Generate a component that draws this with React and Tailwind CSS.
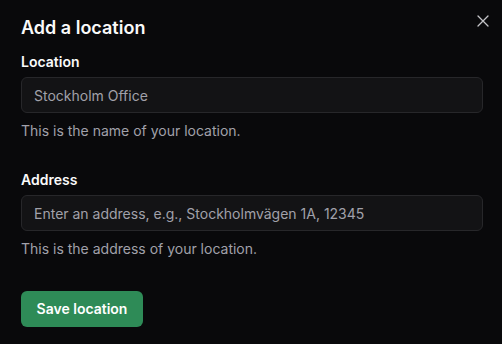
import { useState } from 'react';

const App = () => {
  const [name, setName] = useState('');
  const [address, setAddress] = useState('');

  return (
    <div
      className="relative w-[502px] h-[344px] bg-[#09090b] overflow-hidden"
      style={{ fontFamily: 'Inter, "Noto Sans", sans-serif' }}
    >
      <button type="button" className="absolute right-[9px] top-[11px] p-1 text-[#c4c4c8]">
        <svg width="12" height="12" viewBox="0 0 12 12" fill="none" stroke="currentColor" strokeWidth="1.3" strokeLinecap="round">
          <path d="M1 1L11 11M11 1L1 11" />
        </svg>
      </button>
      <div className="flex flex-col pl-[21px] pr-[19px] pt-[14px]">
        <h2 className="text-[#fafafa] text-lg font-semibold leading-7">Add a location</h2>
        <label className="flex flex-col mt-[10px]">
          <span className="text-[#fafafa] text-sm font-semibold leading-5">Location</span>
          <input
            className="mt-[5px] h-9 w-full rounded-md border border-[#27272a] bg-[#131315] px-3 text-sm text-[#fafafa] placeholder:text-[#a1a1aa] outline-none"
            placeholder="Stockholm Office"
            value={name}
            onChange={(e) => setName(e.target.value)}
          />
          <span className="mt-2 text-sm leading-5 text-[#a1a1aa]">This is the name of your location.</span>
        </label>
        <label className="flex flex-col mt-[29px]">
          <span className="text-[#fafafa] text-sm font-semibold leading-5">Address</span>
          <input
            className="mt-[5px] h-9 w-full rounded-md border border-[#27272a] bg-[#131315] px-3 text-sm text-[#fafafa] placeholder:text-[#a1a1aa] outline-none"
            placeholder="Enter an address, e.g., Stockholmvägen 1A, 12345"
            value={address}
            onChange={(e) => setAddress(e.target.value)}
          />
          <span className="mt-2 text-sm leading-5 text-[#a1a1aa]">This is the address of your location.</span>
        </label>
        <div className="flex mt-8">
          <button type="button" className="h-9 w-[122px] rounded-md bg-[#2e8b57] text-white text-sm font-semibold">
            Save location
          </button>
        </div>
      </div>
    </div>
  );
};

export default App;
